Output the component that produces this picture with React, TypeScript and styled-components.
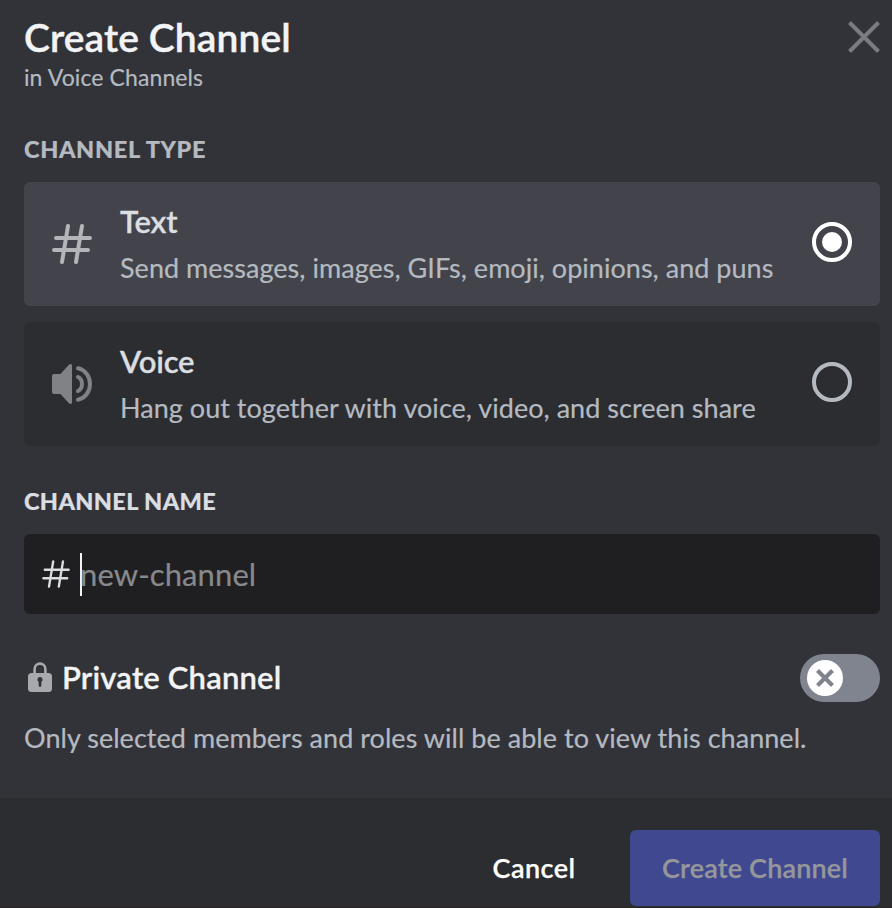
import React from "react";
import styled, { createGlobalStyle } from "styled-components";

const GlobalStyle = createGlobalStyle`
  * { box-sizing: border-box; }
  body {
    margin: 0;
    background: #323338;
    font-family: Lato, "Open Sans", sans-serif;
    font-kerning: normal;
    -webkit-text-stroke: 0.2px currentColor;
  }
`;

const Modal = styled.main`
  display: flex;
  flex-direction: column;
  width: 892px;
  height: 908px;
  overflow: hidden;
  background: #323338;
`;

const Body = styled.div`
  display: flex;
  flex-direction: column;
  height: 798px;
  padding: 13px 12px 0 24px;
`;

const Header = styled.header`
  display: flex;
  justify-content: space-between;
  height: 120px;
`;

const Title = styled.h1`
  margin: 0;
  font-size: 39px;
  font-weight: 600;
  line-height: 48px;
  letter-spacing: 0.1px;
  -webkit-text-stroke-width: 0.4px;
  color: #f2f3f5;
`;

const Subtitle = styled.p`
  margin: 2px 0 0;
  font-size: 23px;
  line-height: 28px;
  letter-spacing: 0.1px;
  color: #b5bac1;
`;

const CloseButton = styled.button`
  display: flex;
  width: 32px;
  height: 32px;
  margin-top: 8px;
  padding: 0;
  border: 0;
  background: none;
`;

const SectionLabel = styled.h2<{ $bright?: boolean }>`
  margin: 0;
  font-size: 23.5px;
  font-weight: 900;
  line-height: 32px;
  letter-spacing: ${(p) => (p.$bright ? "0.37px" : "0.65px")};
  text-transform: uppercase;
  color: ${(p) => (p.$bright ? "#dbdee1" : "#b5bac1")};
`;

const OptionList = styled.div`
  display: flex;
  flex-direction: column;
  gap: 16px;
  margin: 17px 0 39px;
`;

const Option = styled.div<{ $selected?: boolean }>`
  display: flex;
  align-items: center;
  height: 124px;
  padding: 0 28px;
  border-radius: 6px;
  background: ${(p) => (p.$selected ? "#43444b" : "#2b2d31")};
`;

const OptionText = styled.div`
  flex: 1;
  margin-left: 28px;
  white-space: nowrap;
`;

const OptionTitle = styled.div`
  font-size: 31px;
  font-weight: 600;
  line-height: 38px;
  letter-spacing: -0.2px;
  -webkit-text-stroke-width: 0.3px;
  color: #dbdee1;
`;

const OptionDescription = styled.div`
  margin-top: 10px;
  font-size: 27px;
  line-height: 36px;
  letter-spacing: 0.03px;
  color: #b5bac1;
`;

const Radio = styled.span<{ $checked?: boolean }>`
  display: flex;
  align-items: center;
  justify-content: center;
  width: 40px;
  height: 40px;
  margin-bottom: 4px;
  border: 4px solid ${(p) => (p.$checked ? "#fff" : "#b5bac1")};
  border-radius: 50%;
`;

const RadioDot = styled.span`
  width: 20px;
  height: 20px;
  border-radius: 50%;
  background: #fff;
`;

const NameField = styled.div`
  display: flex;
  flex-shrink: 0;
  align-items: center;
  height: 80px;
  margin-top: 17px;
  padding-left: 18px;
  border-radius: 6px;
  background: #1f1f21;
`;

const Caret = styled.span`
  width: 2px;
  height: 43px;
  margin: 0 -2px 0 10px;
  background: #f2f3f5;
`;

const Placeholder = styled.span`
  font-size: 31px;
  line-height: 40px;
  letter-spacing: 0.1px;
  color: #87898c;
`;

const PrivateRow = styled.div`
  display: flex;
  align-items: center;
  height: 48px;
  margin-top: 40px;
  padding-left: 4px;
`;

const PrivateTitle = styled.span`
  flex: 1;
  margin: 0 0 2px 10px;
  font-size: 31px;
  font-weight: 600;
  line-height: 46px;
  letter-spacing: 0.18px;
  -webkit-text-stroke-width: 0.3px;
  color: #f2f3f5;
`;

const Toggle = styled.span`
  display: flex;
  align-items: center;
  width: 80px;
  height: 48px;
  padding-left: 7px;
  border-radius: 24px;
  background: #80848e;
`;

const Knob = styled.span`
  display: flex;
  align-items: center;
  justify-content: center;
  width: 36px;
  height: 36px;
  border-radius: 50%;
  background: #fff;
`;

const Note = styled.p`
  margin: 18px 0 0;
  font-size: 27px;
  line-height: 36px;
  letter-spacing: 0.04px;
  white-space: nowrap;
  color: #b5bac1;
`;

const Footer = styled.footer`
  display: flex;
  align-items: flex-start;
  justify-content: flex-end;
  height: 110px;
  padding: 32px 12px 0;
  border-bottom: 1px solid #2c252a;
  background: #2b2d31;
`;

const Button = styled.button<{ $primary?: boolean }>`
  height: 76px;
  width: ${(p) => (p.$primary ? "250px" : "192px")};
  padding: 0 0 2px;
  border: 0;
  border-radius: 6px;
  background: ${(p) => (p.$primary ? "#404990" : "transparent")};
  font-family: inherit;
  font-size: 27px;
  font-weight: 600;
  letter-spacing: ${(p) => (p.$primary ? "0.15px" : "0.45px")};
  -webkit-text-stroke-width: 0.25px;
  color: ${(p) => (p.$primary ? "#96979a" : "#fff")};
`;

function HashIcon({ size, color, stroke }: { size: number; color: string; stroke: number }) {
  return (
    <svg width={size} height={size} viewBox="0 0 40 40" fill="none" stroke={color} strokeWidth={stroke} strokeLinecap="round">
      <path d="M4 14H38M2 26H36M16 2L10 38M30 2L24 38" />
    </svg>
  );
}

function SpeakerIcon() {
  return (
    <svg width="40" height="40" viewBox="0 0 40 40" fill="#808287">
      <path d="M17.2 .6C18.4-.6 20 .1 20 1.7V38.3C20 39.9 18.4 40.6 17.2 39.4L8.4 30H2C.9 30 0 29.1 0 28V12C0 10.9 .9 10 2 10H8.4Z" />
      <path
        d="M26 4.3C33 5.7 38 12 38 20S33 34.3 26 35.7M26 13C28.8 14.4 30 17 30 20S28.8 25.6 26 27"
        fill="none"
        stroke="#808287"
        strokeWidth="4"
        strokeLinecap="round"
      />
    </svg>
  );
}

function LockIcon() {
  return (
    <svg width="24" height="32" viewBox="0 0 24 32">
      <path d="M6.6 12V7A5.4 5.4 0 0 1 17.4 7V12" fill="none" stroke="#a8a9ad" strokeWidth="2.6" />
      <rect y="11" width="24" height="19" rx="3.5" fill="#a8a9ad" />
      <path d="M12 15A2.6 2.6 0 0 0 10.6 19.8V23.5A1.4 1.4 0 0 0 13.4 23.5V19.8A2.6 2.6 0 0 0 12 15Z" fill="#323338" />
    </svg>
  );
}

export default function App() {
  return (
    <>
      <GlobalStyle />
      <Modal>
        <Body>
          <Header>
            <div>
              <Title>Create Channel</Title>
              <Subtitle>in Voice Channels</Subtitle>
            </div>
            <CloseButton aria-label="Close">
              <svg width="32" height="32" viewBox="0 0 32 32" fill="none" stroke="#797b80" strokeWidth="4">
                <path d="M1.5 1.5L30.5 30.5M30.5 1.5L1.5 30.5" />
              </svg>
            </CloseButton>
          </Header>
          <SectionLabel>Channel type</SectionLabel>
          <OptionList>
            <Option $selected>
              <HashIcon size={40} color="#b4b5b8" stroke={4} />
              <OptionText>
                <OptionTitle>Text</OptionTitle>
                <OptionDescription>Send messages, images, GIFs, emoji, opinions, and puns</OptionDescription>
              </OptionText>
              <Radio $checked>
                <RadioDot />
              </Radio>
            </Option>
            <Option>
              <SpeakerIcon />
              <OptionText>
                <OptionTitle>Voice</OptionTitle>
                <OptionDescription>Hang out together with voice, video, and screen share</OptionDescription>
              </OptionText>
              <Radio />
            </Option>
          </OptionList>
          <SectionLabel $bright>Channel name</SectionLabel>
          <NameField>
            <HashIcon size={28} color="#dbdee1" stroke={3.4} />
            <Caret />
            <Placeholder>new-channel</Placeholder>
          </NameField>
          <PrivateRow>
            <LockIcon />
            <PrivateTitle>Private Channel</PrivateTitle>
            <Toggle>
              <Knob>
                <svg width="18" height="18" viewBox="0 0 18 18" stroke="#80848e" strokeWidth="4.2">
                  <path d="M1.5 1.5L16.5 16.5M16.5 1.5L1.5 16.5" />
                </svg>
              </Knob>
            </Toggle>
          </PrivateRow>
          <Note>Only selected members and roles will be able to view this channel.</Note>
        </Body>
        <Footer>
          <Button>Cancel</Button>
          <Button $primary>Create Channel</Button>
        </Footer>
      </Modal>
    </>
  );
}
